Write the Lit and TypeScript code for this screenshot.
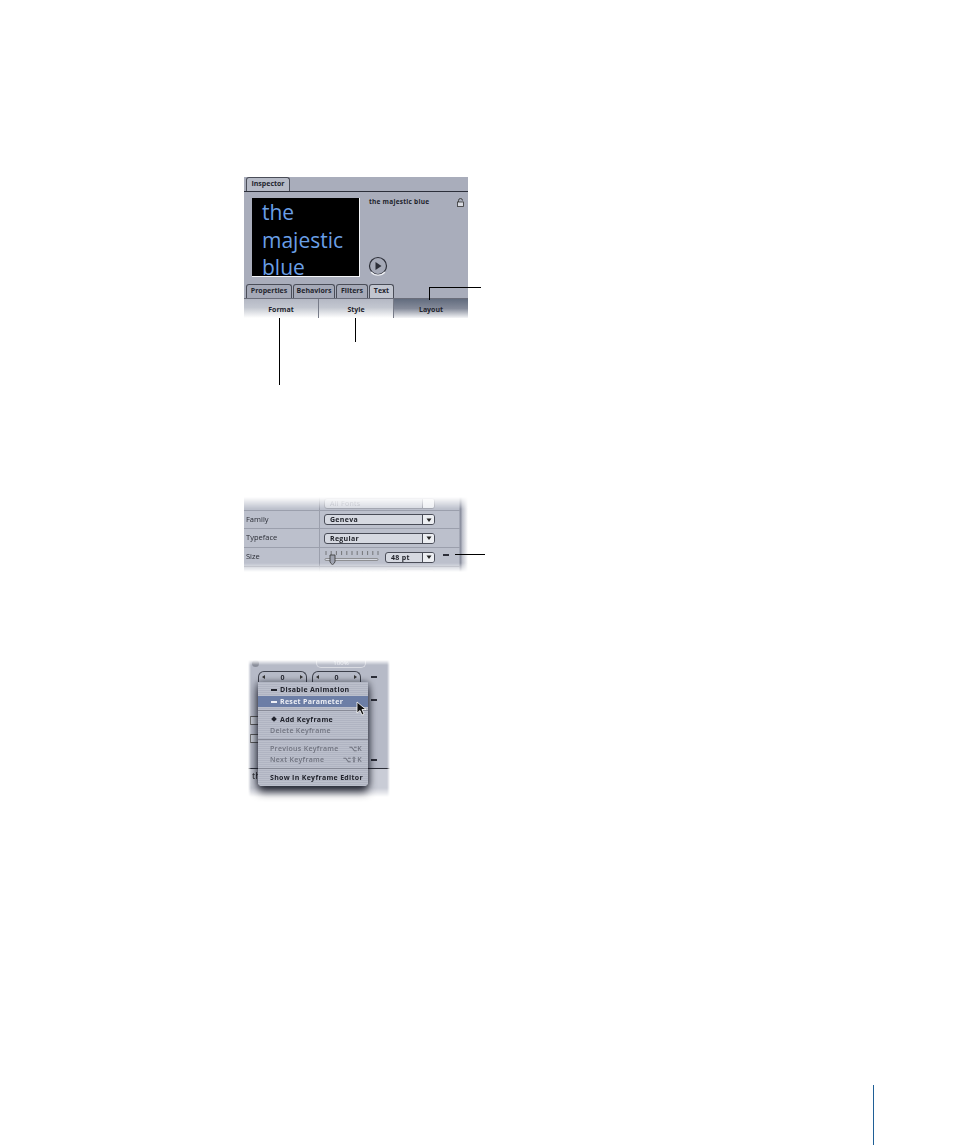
import { LitElement, html, css, svg } from "lit";
import { customElement } from "lit/decorators.js";

const caret = svg`<svg width="8" height="8" viewBox="0 0 8 8"><path d="M1.5 2.5h5L4 6z" fill="#222"/></svg>`;

@customElement("app-root")
export class AppRoot extends LitElement {
  static styles = css`
    :host { display: block; position: relative; width: 954px; height: 1145px; background: #fff; overflow: hidden;
      font-family: "Open Sans", "Liberation Sans", sans-serif; color: #1c1e26; }
    .page { display: flex; flex-direction: column; align-items: flex-start; padding: 177px 0 0 244px; }
    .fig { position: relative; filter: blur(0.4px); }
    .fig2 { margin-top: 179px; }
    .fig3 { margin: 88px 0 0 4px; }
    .call { position: absolute; background: #000; }

    /* Figure 1 */
    .insp { width: 224px; height: 141px; display: flex; flex-direction: column; background: #a9adbb; }
    .tabbar { height: 14px; flex: none; display: flex; padding-left: 2px; border-bottom: 1px solid #2c2f3a; }
    .tab { height: 13px; border: 1px solid #4a4d58; border-bottom: none; border-radius: 3px 3px 0 0; background: #b6bac6;
      font-size: 7px; font-weight: 700; line-height: 12px; text-align: center; box-sizing: border-box; color: #23252e; white-space: nowrap; }
    .w-insp { width: 44px; height: 14px; }
    .head { height: 92px; flex: none; display: flex; padding: 6px 0 0 8px; box-sizing: border-box; }
    .preview { width: 108px; height: 79px; background: #000; border-right: 1px solid #f4f5f8; border-bottom: 1px solid #f4f5f8;
      box-sizing: border-box; padding: 1px 0 0 10px; font: 21px/27.5px "Open Sans", "DejaVu Sans", sans-serif; color: #6a9fe6; }
    .meta { flex: 1; position: relative; }
    .title { position: absolute; left: 9px; top: 0; font-size: 6.5px; font-weight: 700; line-height: 8px; white-space: nowrap; color: #20222a; letter-spacing: .25px; }
    .lock { position: absolute; right: 4px; top: 0; }
    .play { position: absolute; left: 8px; top: 58px; }
    .tabs2 { height: 14px; flex: none; display: flex; gap: 1px; padding-left: 2px; border-bottom: 1px solid #6a6d7a; }
    .tabs2 .tab { background: #a5a9b7; height: 14px; }
    .tabs2 .on { background: #c2c6d0; }
    .subs { flex: 1; min-height: 0; display: flex; }
    .sub { flex: 1; font-size: 7px; font-weight: 700; text-align: center; line-height: 10px; padding-top: 6px; box-sizing: border-box; color: #23252e;
      background: linear-gradient(#b4b8c4 0%, #c3c7d0 45%, #fff 100%); border-left: 1px solid #777b88; }
    .sub:first-child { border-left: none; }
    .sub.dark { background: linear-gradient(#626c7e 0%, #858b9a 50%, #f4f5f7 100%); }

    /* Figure 2 */
    .params { width: 224px; height: 75px; display: flex; flex-direction: column; overflow: hidden;
      background: linear-gradient(90deg, #bcc0cc 0, #bcc0cc 215px, #8d91a0 216px, #8d91a0 217px, #b9bcc7 218px, #fff 224px);
      -webkit-mask-image: linear-gradient(#0000 0, #000 12px, #000 66px, #0000 75px); mask-image: linear-gradient(#0000 0, #000 12px, #000 66px, #0000 75px); }
    .prow { display: grid; grid-template-columns: 74px 1fr; align-items: center; border-bottom: 1px solid #9b9fac; font-size: 7.5px; color: #2a2c35; padding-left: 2px; width: 216px; box-sizing: border-box; height: 18px; flex: none; }
    .prow > span:first-child { border-right: 1px solid #9b9fac; line-height: 17px; height: 100%; }
    .ctrl { padding-left: 4px; display: flex; align-items: center; }
    .sel { height: 11px; width: 111px; border: 1px solid #4a4d58; border-radius: 3px; background: #d6d9e1; box-sizing: border-box; display: flex; align-items: center; font-size: 7px; font-weight: 700; padding-left: 5px; position: relative; color: #1e2028; letter-spacing: .3px; }
    .btn { position: absolute; right: 0; top: 0; bottom: 0; width: 11px; border-left: 1px solid #4a4d58; background: #eceef2; display: flex; align-items: center; justify-content: center; border-radius: 0 2px 2px 0; }
    .sel.pale { background: #d5d8e0; border-color: #a0a3ae; color: #a6a9b4; font-weight: 400; }
    .sel.pale .btn { border-color: #a0a3ae; }
    .faint { opacity: .45; }
    .top { height: 14px; }
    .top > span:first-child { line-height: 14px; }
    .slider { width: 55px; height: 15px; margin-right: 6px; flex: none; }
    .sel.small { width: 50px; }
    .dash { width: 6px; height: 2px; background: #2c2e38; flex: none; }
    .sizeDash { position: absolute; left: 199px; top: 57px; }

    /* Figure 3 */
    .pop { width: 142px; height: 137px; background: #b6bac7; position: relative;
      -webkit-mask-image: linear-gradient(#0000 0, #000 5px, #000 128px, #0000 137px), linear-gradient(90deg, #0000 0, #000 3px, #000 139px, #0000 142px);
      mask-image: linear-gradient(#0000 0, #000 5px, #000 128px, #0000 137px), linear-gradient(90deg, #0000 0, #000 3px, #000 139px, #0000 142px);
      -webkit-mask-composite: source-in; mask-composite: intersect; }
    .steps { display: flex; gap: 5px; padding: 11px 0 0 10px; }
    .step { width: 49px; height: 11px; border: 1px solid #3d404b; border-bottom: none; border-radius: 6px 6px 0 0; box-sizing: border-box; display: flex; justify-content: space-between; align-items: center; padding: 0 3px; font-size: 7px; font-weight: 700; color: #2c2e38; }
    .step i { width: 0; height: 0; border: 2.5px solid transparent; }
    .step i.l { border-right: 3px solid #333; border-left: 0; }
    .step i.r { border-left: 3px solid #333; border-right: 0; }
    .knob { position: absolute; left: 4px; top: 0; width: 7px; height: 7px; border-radius: 50%; background: #8a8e9a; }
    .hundred { position: absolute; left: 68px; top: 0; width: 50px; height: 8px; border: 1px solid #d9dbe2; border-top: none; border-radius: 0 0 5px 5px; box-sizing: border-box; font-size: 6px; text-align: center; color: #eef0f4; line-height: 6px; }
    .rdash { position: absolute; left: 123px; }
    .check { position: absolute; left: 2px; width: 10px; height: 9px; border: 1px solid #555; background: #c8ccd5; box-sizing: border-box; }
    .rule { position: absolute; left: 0; right: 0; top: 108px; height: 1px; background: #2c2e38; }
    .under { position: absolute; left: 0; right: 0; top: 109px; bottom: 0; background: #c9ccd6; font-size: 9px; padding-left: 4px; line-height: 13px; color: #111; box-sizing: border-box; }
    .menu { position: absolute; left: 258px; top: 682px; width: 110px; height: 104px; background: repeating-linear-gradient(#b0b4c2 0 1px, #bcc0cc 1px 2px);
      box-shadow: 0 6px 8px rgba(20,22,35,.85), -2px 0 6px rgba(20,22,35,.3), 2px 0 6px rgba(20,22,35,.3); border-radius: 0 0 4px 4px; display: flex; flex-direction: column; padding-top: 2px; box-sizing: border-box; font-size: 7px; font-weight: 700; color: #20222b; filter: blur(0.4px); z-index: 2; letter-spacing: .3px; }
    .mi { height: 11px; line-height: 11px; padding-left: 12px; white-space: nowrap; display: flex; justify-content: space-between; padding-right: 6px; position: relative; flex: none; }
    .mi.mark { padding-left: 22px; }
    .mi.hi { background: #6c7ea6; color: #eef0f6; }
    .mi.off { color: #70737f; font-weight: 600; }
    .mi b { position: absolute; left: 13px; top: 4.500px; width: 6px; height: 2px; background: currentColor; }
    .mi b.dia { width: 4px; height: 4px; left: 14px; top: 3px; transform: rotate(45deg); }
    .sep { height: 1px; background: #888b98; margin: 3px 0; flex: none; }
    .cursor { position: absolute; left: 356px; top: 701px; z-index: 3; }
    .foot { position: absolute; left: 873px; top: 1085px; width: 1px; height: 60px; background: #1f5f96; }
  `;

  render() {
    const ticks = [0, 1, 2, 3, 4, 5, 6, 7, 8, 9, 10];
    return html`
      <div class="page">
        <div class="fig">
          <div class="insp">
            <div class="tabbar"><div class="tab w-insp">Inspector</div></div>
            <div class="head">
              <div class="preview">the<br />majestic<br />blue</div>
              <div class="meta">
                <div class="title">the majestic blue</div>
                <svg class="lock" width="7" height="9" viewBox="0 0 7 9"><path d="M1.500 4V2.500a2 2 0 0 1 4 0" fill="none" stroke="#333" stroke-width=".9"/><rect x=".5" y="4" width="6" height="4.500" fill="#d8dae1" stroke="#333" stroke-width=".8"/></svg>
                <svg class="play" width="20" height="20" viewBox="0 0 20 20"><circle cx="10" cy="10" r="8.500" fill="#a5a9b7" stroke="#2d2f39" stroke-width="1.200"/><path d="M3 16a9.500 9.500 0 0 0 14 0" fill="none" stroke="#eef0f4" stroke-width="1.200"/><path d="M7.500 6l6 4-6 4z" fill="#2b2d37"/></svg>
              </div>
            </div>
            <div class="tabs2">
              <div class="tab" style="width:46px">Properties</div>
              <div class="tab" style="width:42px">Behaviors</div>
              <div class="tab" style="width:32px">Filters</div>
              <div class="tab on" style="width:25px">Text</div>
            </div>
            <div class="subs">
              <div class="sub">Format</div>
              <div class="sub">Style</div>
              <div class="sub dark">Layout</div>
            </div>
          </div>
          <div class="call" style="left:185px;top:110px;width:52px;height:1px"></div>
          <div class="call" style="left:185px;top:110px;width:1px;height:13px"></div>
          <div class="call" style="left:111px;top:141px;width:1px;height:24px"></div>
          <div class="call" style="left:35px;top:141px;width:1px;height:67px"></div>
        </div>

        <div class="fig fig2">
          <div class="params">
            <div class="prow top"><span></span><div class="ctrl"><div class="sel pale">All Fonts<span class="btn"></span></div></div></div>
            <div class="prow"><span>Family</span><div class="ctrl"><div class="sel">Geneva<span class="btn">${caret}</span></div></div></div>
            <div class="prow" style="height:19px"><span>Typeface</span><div class="ctrl"><div class="sel">Regular<span class="btn">${caret}</span></div></div></div>
            <div class="prow" style="height:19px"><span>Size</span><div class="ctrl">
              <svg class="slider" viewBox="0 0 55 15">
                ${ticks.map((i) => svg`<line x1=${2 + i * 5.2} x2=${2 + i * 5.2} y1="1" y2="5" stroke="#555" stroke-width=".7"/>`)}
                <rect x="1" y="8.500" width="53" height="2" rx="1" fill="#d5d8e0" stroke="#666" stroke-width=".6"/>
                <path d="M6 5h5v7l-2.500 3L6 12z" fill="#9fa3b0" stroke="#333" stroke-width=".8"/>
              </svg>
              <div class="sel small">48 pt<span class="btn">${caret}</span></div>
            </div></div>
            <div class="prow faint" style="border:none"><span></span><div class="ctrl">
              <svg class="slider" viewBox="0 0 55 15" style="margin-top:-10px">
                ${ticks.map((i) => svg`<line x1=${2 + i * 5.2} x2=${2 + i * 5.2} y1="7" y2="13" stroke="#555" stroke-width=".7"/>`)}
              </svg>
              <div class="sel small pale" style="margin-top:-4px"></div>
            </div></div>
          </div>
          <div class="dash sizeDash"></div>
          <div class="call" style="left:211px;top:57px;width:30px;height:1px"></div>
        </div>

        <div class="fig fig3">
          <div class="pop">
            <div class="knob"></div>
            <div class="hundred">100%</div>
            <div class="steps">
              <div class="step"><i class="l"></i>0<i class="r"></i></div>
              <div class="step"><i class="l"></i>0<i class="r"></i></div>
            </div>
            <div class="dash rdash" style="top:16px"></div>
            <div class="dash rdash" style="top:39px"></div>
            <div class="dash rdash" style="top:99px"></div>
            <div class="check" style="top:56px"></div>
            <div class="check" style="top:74px"></div>
            <div class="rule"></div>
            <div class="under">th</div>
          </div>
        </div>
      </div>

      <div class="menu">
        <div class="mi mark"><b></b>Disable Animation</div>
        <div class="mi mark hi" style="margin-top:1px"><b></b>Reset Parameter</div>
        <div class="sep"></div>
        <div class="mi mark"><b class="dia"></b>Add Keyframe</div>
        <div class="mi off">Delete Keyframe</div>
        <div class="sep"></div>
        <div class="mi off"><span>Previous Keyframe</span><span>⌥K</span></div>
        <div class="mi off"><span>Next Keyframe</span><span>⌥⇧K</span></div>
        <div class="sep"></div>
        <div class="mi">Show In Keyframe Editor</div>
      </div>
      <svg class="cursor" width="11" height="15" viewBox="0 0 11 15"><path d="M1 1v11l3-2.500 2 4.500 2-1-2-4.500h4z" fill="#111" stroke="#fff" stroke-width=".8"/></svg>
      <div class="foot"></div>
    `;
  }
}
